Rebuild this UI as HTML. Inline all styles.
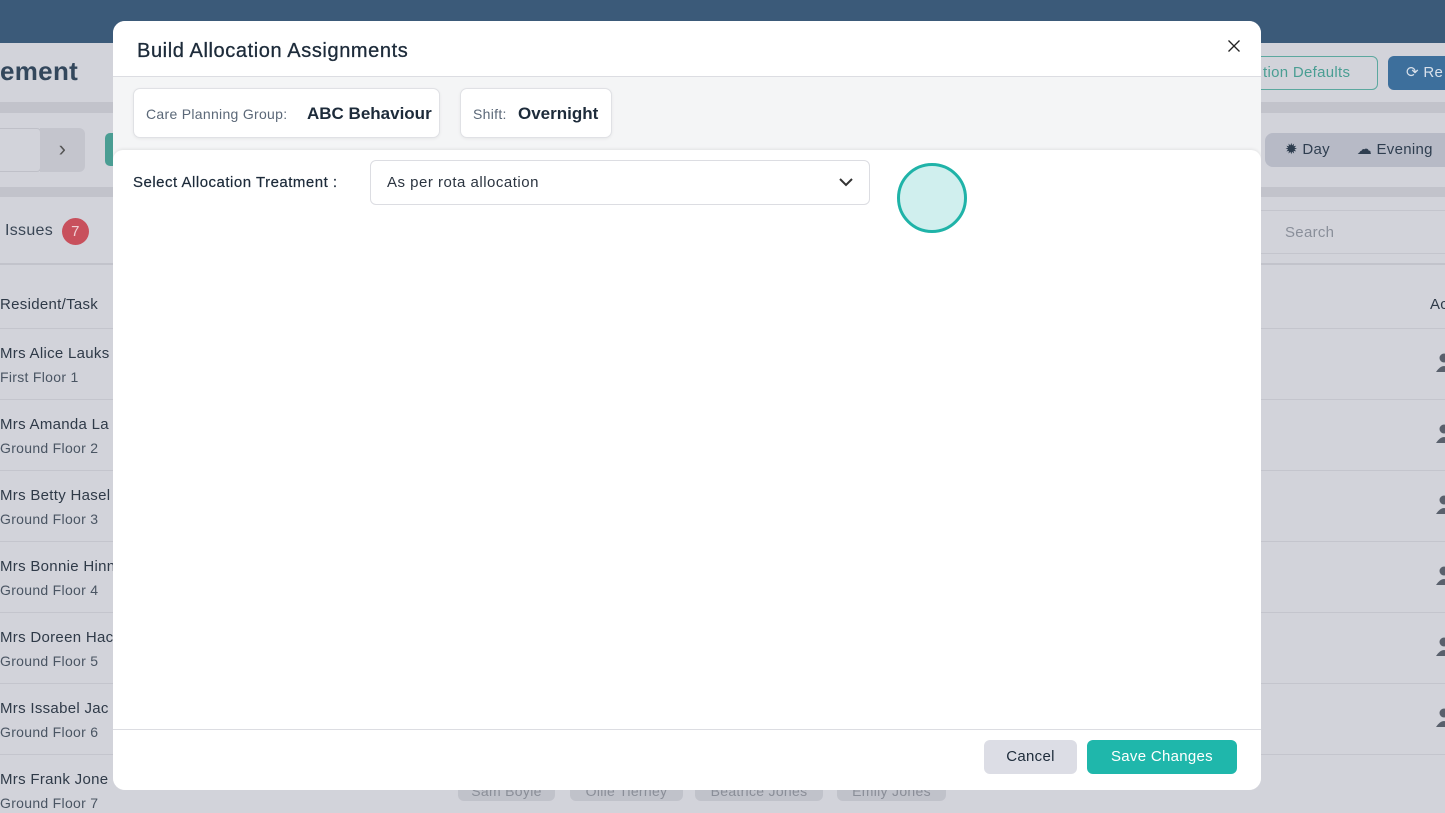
<!DOCTYPE html>
<html><head><style>
*{box-sizing:border-box;margin:0;padding:0}
html,body{width:1445px;height:813px;overflow:hidden}
body{position:relative;background:#d2d3da;font-family:"Liberation Sans",sans-serif;color:#2b3440;letter-spacing:.3px}
.a{position:absolute}
.row{position:absolute;left:0;width:1445px;height:71px;border-top:1px solid #c4c5cd}
.row b{position:absolute;left:0;top:16px;font-size:15px;font-weight:normal;color:#2f3a48}
.row i{position:absolute;left:0;top:40px;font-size:14px;font-style:normal;color:#4a5563}
.tag{position:absolute;top:781px;height:20px;background:#c0c2ca;border-radius:6px;font-size:14px;color:#8a8e98;text-align:center;line-height:20px}
</style></head><body>
<div class="a" style="left:0;top:0;width:1445px;height:43px;background:#3b5a79"></div>
<div class="a" style="left:0;top:102px;width:1445px;height:11px;background:#c2c3cb"></div>
<div class="a" style="left:0;top:187px;width:1445px;height:10px;background:#c2c3cb"></div>
<div class="a" style="left:0;top:263px;width:1445px;height:2px;background:#c2c3cb"></div>
<div class="a" style="left:0;top:56px;font-size:26px;font-weight:bold;color:#33475c">ement</div>
<div class="a" style="left:-5px;top:128px;width:46px;height:44px;border:1px solid #bfc0c8;border-radius:4px"></div>
<div class="a" style="left:40px;top:128px;width:45px;height:44px;background:#c4c5cd;border-radius:0 6px 6px 0;font-size:22px;color:#555;text-align:center;line-height:42px">›</div>
<div class="a" style="left:105px;top:133px;width:12px;height:33px;background:#4a9d93;border-radius:5px 0 0 5px"></div>
<div class="a" style="left:5px;top:222px;font-size:16px;color:#3a4655">Issues</div>
<div class="a" style="left:62px;top:218px;width:27px;height:27px;border-radius:50%;background:#c8505c;color:#f0d0d4;text-align:center;line-height:27px;font-size:15px">7</div>
<div class="a" style="left:0;top:296px;font-size:15px;color:#2f3a48">Resident/Task</div>
<div class="a" style="left:1430px;top:296px;font-size:15px;color:#2f3a48">Ac</div>
<div class="a" style="left:1240px;top:56px;width:138px;height:34px;border:1px solid #5ca89f;border-radius:6px;color:#4a9e93;font-size:15px;line-height:32px;padding-left:22px">tion Defaults</div>
<div class="a" style="left:1388px;top:56px;width:70px;height:34px;background:#3d6f9c;border-radius:6px;color:#d8e0ea;font-size:15px;line-height:34px;padding-left:18px">⟳ Re</div>
<div class="a" style="left:1265px;top:133px;width:190px;height:34px;background:#b7bac6;border-radius:8px;font-size:15px;color:#2f3e50;line-height:34px;padding-left:20px">✹ Day &nbsp;&nbsp;&nbsp;&nbsp; ☁ Evening</div>
<div class="a" style="left:1255px;top:210px;width:200px;height:44px;border-top:1px solid #c4c5cd;border-bottom:1px solid #c4c5cd;font-size:15px;color:#8a8f9a;line-height:44px;padding-left:30px">Search</div>
<div class="row" style="top:328px"><b>Mrs Alice Lauks</b><i>First Floor 1</i></div>
<div class="row" style="top:399px"><b>Mrs Amanda La</b><i>Ground Floor 2</i></div>
<div class="row" style="top:470px"><b>Mrs Betty Hasel</b><i>Ground Floor 3</i></div>
<div class="row" style="top:541px"><b>Mrs Bonnie Hinn</b><i>Ground Floor 4</i></div>
<div class="row" style="top:612px"><b>Mrs Doreen Hac</b><i>Ground Floor 5</i></div>
<div class="row" style="top:683px"><b>Mrs Issabel Jac</b><i>Ground Floor 6</i></div>
<div class="row" style="top:754px"><b>Mrs Frank Jone</b><i>Ground Floor 7</i></div>
<svg class="a" style="left:1436px;top:352px" width="12" height="400" viewBox="0 0 12 400" fill="#59606c">
<g id="p"><circle cx="8" cy="6" r="4.5"/><path d="M0 20 Q8 8 16 20Z"/></g>
<use href="#p" y="71"/><use href="#p" y="142"/><use href="#p" y="213"/><use href="#p" y="284"/><use href="#p" y="355"/></svg>
<div class="tag" style="left:458px;width:97px">Sam Boyle</div>
<div class="tag" style="left:570px;width:113px">Ollie Tierney</div>
<div class="tag" style="left:695px;width:128px">Beatrice Jones</div>
<div class="tag" style="left:837px;width:109px">Emily Jones</div>

<div class="a" style="left:113px;top:21px;width:1148px;height:769px;background:#f4f5f6;border-radius:12px;overflow:hidden">
 <div class="a" style="left:0;top:0;width:1148px;height:56px;background:#fff;border-bottom:1px solid #dcdde2"></div>
 <div class="a" style="left:24px;top:19px;font-size:20px;color:#1d2b3a;letter-spacing:.6px;-webkit-text-stroke:.3px #1d2b3a">Build Allocation Assignments</div>
 <svg class="a" style="left:1115px;top:19px" width="12" height="12" viewBox="0 0 12 12" stroke="#222" stroke-width="1.3"><path d="M0.5 0.5L11.5 11.5M11.5 0.5L0.5 11.5"/></svg>
 <div class="a" style="left:20px;top:67px;width:307px;height:50px;background:#fff;border:1px solid #e0e1e5;border-radius:7px;box-shadow:0 1px 3px rgba(0,0,0,.06)">
  <span class="a" style="left:12px;top:17px;font-size:14px;color:#5b6878">Care Planning Group:</span>
  <span class="a" style="left:173px;top:15px;font-size:17px;font-weight:bold;color:#1d2b3a;letter-spacing:0">ABC Behaviour</span></div>
 <div class="a" style="left:347px;top:67px;width:152px;height:50px;background:#fff;border:1px solid #e0e1e5;border-radius:7px;box-shadow:0 1px 3px rgba(0,0,0,.06)">
  <span class="a" style="left:12px;top:17px;font-size:14px;color:#5b6878">Shift:</span>
  <span class="a" style="left:57px;top:15px;font-size:17px;font-weight:bold;color:#1d2b3a;letter-spacing:0">Overnight</span></div>
 <div class="a" style="left:0;top:129px;width:1148px;height:580px;background:#fff;border-radius:10px 10px 0 0;box-shadow:0 -1px 3px rgba(0,0,0,.08)"></div>
 <div class="a" style="left:20px;top:153px;font-size:15px;color:#1d2b3a;letter-spacing:.5px;-webkit-text-stroke:.2px #1d2b3a">Select Allocation Treatment :</div>
 <div class="a" style="left:257px;top:139px;width:500px;height:45px;border:1px solid #dcdde2;border-radius:6px;font-size:15px;color:#2b3440;line-height:43px;padding-left:16px;letter-spacing:.5px">As per rota allocation
  <svg class="a" style="right:16px;top:17px" width="14" height="9" viewBox="0 0 14 9" fill="none" stroke="#333" stroke-width="2"><path d="M1 1L7 7L13 1"/></svg></div>
 <div class="a" style="left:784px;top:142px;width:70px;height:70px;border-radius:50%;background:#d0efee;border:3px solid #1fb3a8"></div>
 <div class="a" style="left:0;top:708px;width:1148px;height:61px;background:#fff;border-top:1px solid #dcdde2"></div>
 <div class="a" style="left:871px;top:719px;width:93px;height:34px;background:#dcdde5;border-radius:6px;font-size:15px;color:#1d2b3a;text-align:center;line-height:34px">Cancel</div>
 <div class="a" style="left:974px;top:719px;width:150px;height:34px;background:#1fb7ab;border-radius:6px;font-size:15px;color:#fff;text-align:center;line-height:34px">Save Changes</div>
</div>
</body></html>
